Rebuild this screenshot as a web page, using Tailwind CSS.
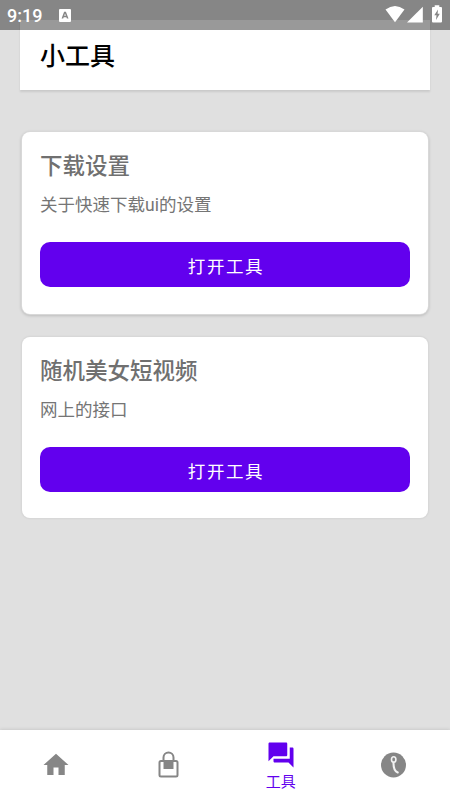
<!DOCTYPE html>
<html lang="zh-CN">
<head>
<meta charset="utf-8">
<title>小工具</title>
<script src="https://cdn.jsdelivr.net/npm/@tailwindcss/browser@4"></script>
</head>
<body class="relative flex h-[800px] w-[450px] flex-col overflow-hidden bg-[#e0e0e0] font-['Noto_Sans_CJK_SC',sans-serif]">
  <!-- status bar -->
  <div class="absolute inset-x-0 top-0 z-10 flex h-[30px] items-center bg-black/40 pl-[7px] font-[Roboto,sans-serif] text-white">
    <span class="w-[52px] pt-[1px] text-[18px] leading-[30px] font-medium">9:19</span>
    <svg class="h-[13px] w-[12px]" viewBox="0 0 12 13"><path fill="#fff" fill-rule="evenodd" d="M1 0H11Q12 0 12 1V12Q12 13 11 13H1Q0 13 0 12V1Q0 0 1 0ZM5.1 2.800L2.600 9.500H4.200L4.700 8.200H7.400L7.900 9.500H9.500L6.900 2.800ZM5.200 6.800L6 4.500L6.900 6.800Z"/></svg>
    <svg class="ml-auto h-[30px] w-[65px]" viewBox="385 0 65 30" fill="#fff">
      <path d="M385.500 9.500Q395 2.500 404.500 9.500L395 22.200Z"/>
      <path d="M422.800 6.700V22.500H407Z"/>
      <path fill-rule="evenodd" d="M434.700 5.300H439.300V7H441Q442 7 442 8V21.500Q442 22.500 441 22.500H433Q432 22.500 432 21.500V8Q432 7 433 7H434.700ZM438 9.500L434.300 15.300H436.500L436 20L439.800 13.800H437.600Z"/>
    </svg>
  </div>

  <header class="mx-5 mt-5 h-[70px] bg-white pt-[16px] pl-5 shadow-[0_2px_2px_rgba(0,0,0,0.1)]">
    <h1 class="text-[25px] leading-[36px] font-medium text-black">小工具</h1>
  </header>

  <main class="mx-[22px] mt-[42px] flex flex-col gap-[23px]">
    <section class="h-[182px] rounded-[8px] bg-white px-[18px] pt-[16px] shadow-[0_0_0_1px_#d8d8d8,0_1px_3px_1px_rgba(0,0,0,0.16)]">
      <h2 class="text-[22.5px] leading-8 font-medium text-[#707070]">下载设置</h2>
      <p class="mt-[11px] h-[26px] text-[17.5px] leading-[26px] text-[#757575]">关于快速下载<span class="font-[Roboto] leading-none">ui</span>的设置</p>
      <button class="mt-[25.4px] block h-[45px] w-full rounded-[10px] bg-[#6200ee] pt-[3px] pl-[2px] text-[17.5px] tracking-[1.6px] text-white">打开工具</button>
    </section>
    <section class="h-[181px] rounded-[8px] bg-white px-[18px] pt-[16px] shadow-[0_0_0_1px_#d8d8d8,0_0_2px_1px_rgba(0,0,0,0.05)]">
      <h2 class="text-[22.5px] leading-8 font-medium text-[#707070]">随机美女短视频</h2>
      <p class="mt-[11px] h-[26px] text-[17.5px] leading-[26px] text-[#757575]">网上的接口</p>
      <button class="mt-[25.4px] block h-[45px] w-full rounded-[10px] bg-[#6200ee] pt-[3px] pl-[2px] text-[17.5px] tracking-[1.6px] text-white">打开工具</button>
    </section>
  </main>

  <nav class="mt-auto grid h-[70px] grid-cols-4 justify-items-center bg-white shadow-[0_0_4px_rgba(0,0,0,0.16)]">
    <svg class="mt-5 size-[30px]" viewBox="0 0 24 24" fill="#868686"><path d="M10 20v-6h4v6h5v-8h3L12 3 2 12h3v8z"/></svg>
    <svg class="mt-5 size-[30px]" viewBox="0 0 30 30" fill="none" stroke="#868686" stroke-width="2"><rect x="5.500" y="10.900" width="18" height="15.500" rx="1.500"/><path d="M9.500 11V7.500A5 5 0 0 1 19.500 7.500V11"/><path fill="#868686" stroke="none" d="M9.500 11H19.500V19H9.500Z"/></svg>
    <div class="flex flex-col items-center pt-[10px]">
      <svg class="size-[30px]" viewBox="0 0 24 24" fill="#6200ee"><path d="M21 6h-2v9H6v2c0 .55.45 1 1 1h11l4 4V7c0-.55-.45-1-1-1zm-4 6V3c0-.55-.45-1-1-1H3c-.55 0-1 .45-1 1v14l4-4h10c.55 0 1-.45 1-1z"/></svg>
      <span class="pr-[1px] text-[15px] leading-[22px] text-[#6200ee]">工具</span>
    </div>
    <svg class="mt-5 size-[30px]" viewBox="0 0 30 30" fill="none"><circle cx="14.500" cy="15" r="12.500" fill="#868686"/><ellipse cx="14.700" cy="9.500" rx="2.200" ry="2.800" stroke="#f2f2f2" stroke-width="1.600"/><path d="M14.500 12.500Q14.300 20.500 18.700 22.500" stroke="#f2f2f2" stroke-width="2.100" stroke-linecap="round"/></svg>
  </nav>
</body>
</html>
